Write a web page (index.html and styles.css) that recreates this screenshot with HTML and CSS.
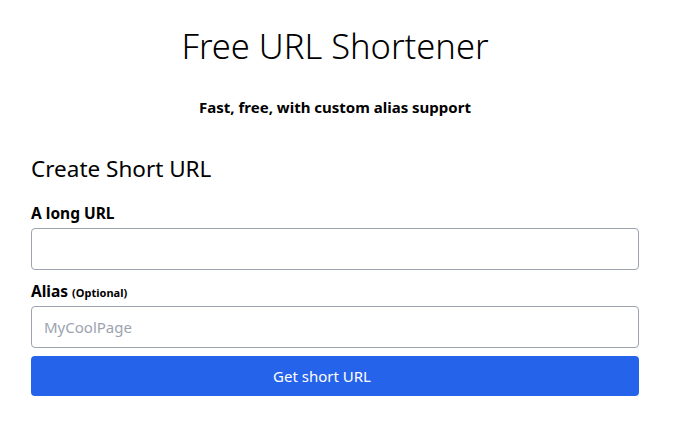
FILE: index.html
```html
<!DOCTYPE html>
<html>
<head>
<meta charset="utf-8">
<link rel="stylesheet" href="styles.css">
</head>
<body>
<main class="page">
  <h1 class="title">Free URL Shortener</h1>
  <p class="subtitle">Fast, free, with custom alias support</p>
  <h2 class="section">Create Short URL</h2>
  <form class="form">
    <label class="label label-first">A long URL</label>
    <input class="input" type="text">
    <label class="label">Alias <small class="opt">(Optional)</small></label>
    <input class="input" type="text" placeholder="MyCoolPage">
    <button class="btn" type="button">Get short URL</button>
  </form>
</main>
</body>
</html>
```
FILE: styles.css
```css
html, body { margin: 0; padding: 0; background: #fff; }
body { font-family: "Noto Sans", "Open Sans", sans-serif; color: #000; }
.page { padding: 24px 39px 0 31px; }
.title { margin: 0; text-align: center; font-size: 34.5px; font-weight: 300; line-height: 44px; }
.subtitle { margin: 29px 0 0; text-align: center; font-size: 15px; font-weight: 700; line-height: 20px; }
.section { margin: 36px 0 0; font-size: 22.5px; font-weight: 400; line-height: 32px; }
.form { display: flex; flex-direction: column; }
.label { margin-top: 11px; margin-bottom: 5px; font-size: 15.5px; font-weight: 700; line-height: 20px; height: 20px; }
.label-first { margin-top: 18px; }
.opt { font-size: 11px; line-height: 1; }
.input { box-sizing: border-box; height: 42px; border: 1px solid #9ca3af; border-radius: 4px; padding: 0 12px; font-family: inherit; font-size: 15px; }
.input::placeholder { color: #9ca3af; }
.btn { margin-top: 8px; height: 40px; border: 0; border-radius: 4px; padding: 0 26px 0 0; background: #2563eb; color: #fff; font-family: inherit; font-size: 15px; }
```
